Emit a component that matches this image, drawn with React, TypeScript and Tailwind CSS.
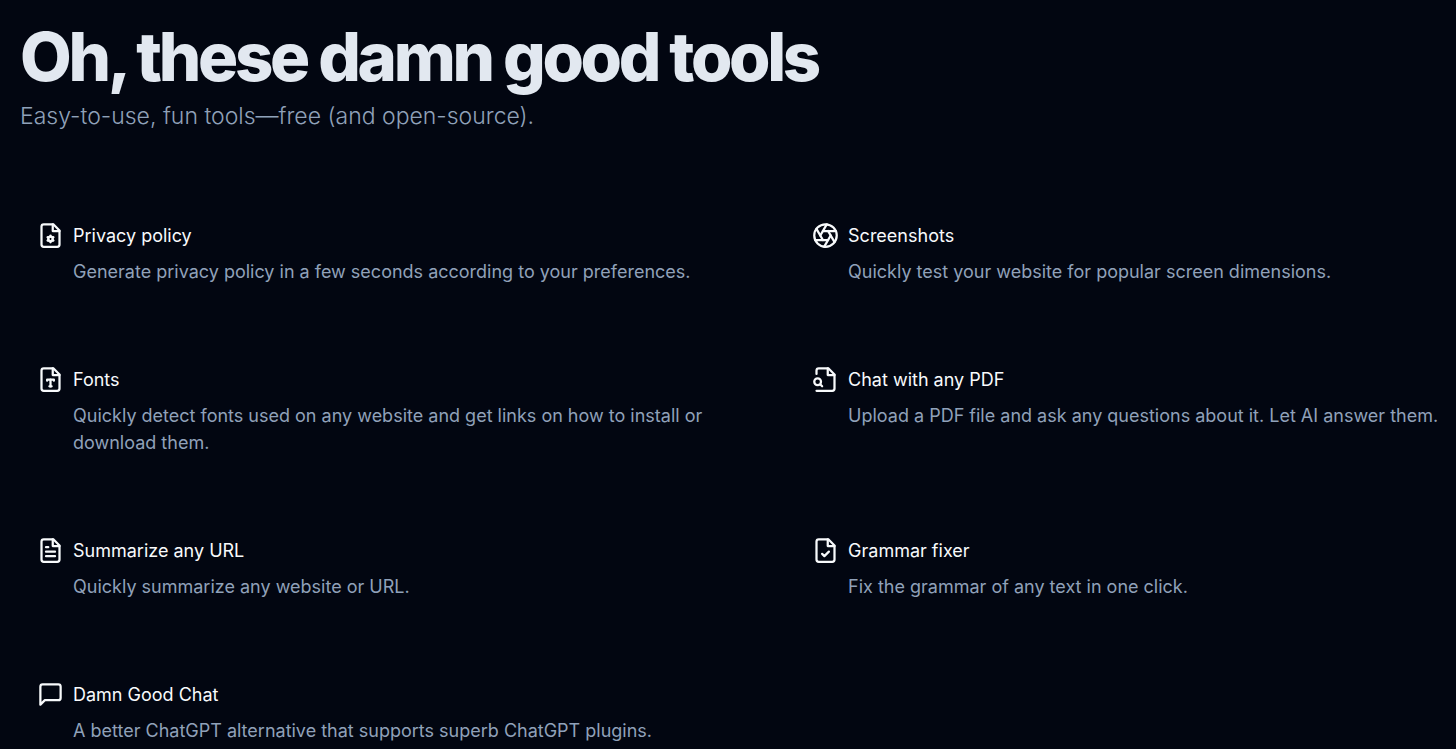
import type { ReactNode } from 'react';
import { Aperture } from 'lucide-react';

type Tool = {
  title: string;
  description: string;
  icon: ReactNode;
};

function Icon({ children }: { children: ReactNode }) {
  return (
    <svg
      viewBox="0 0 24 24"
      width={27}
      height={27}
      fill="none"
      stroke="currentColor"
      strokeWidth={2}
      strokeLinecap="round"
      strokeLinejoin="round"
      aria-hidden="true"
    >
      {children}
    </svg>
  );
}

// Page outline with a folded corner, shared by the document icons
function FileIcon({ children }: { children: ReactNode }) {
  return (
    <Icon>
      <path d="M14.5 2H6a2 2 0 0 0-2 2v16a2 2 0 0 0 2 2h12a2 2 0 0 0 2-2V7.5L14.5 2z" />
      <path d="M14 2v6h6" />
      {children}
    </Icon>
  );
}

const tools: Tool[] = [
  {
    title: 'Privacy policy',
    description: 'Generate privacy policy in a few seconds according to your preferences.',
    icon: (
      <FileIcon>
        <circle cx="12" cy="15" r="2" />
        <path d="M12 12v1" />
        <path d="M12 17v1" />
        <path d="m14.6 13.5-.87.5" />
        <path d="m10.27 16-.87.5" />
        <path d="m14.6 16.5-.87-.5" />
        <path d="m10.27 14-.87-.5" />
      </FileIcon>
    ),
  },
  {
    title: 'Screenshots',
    description: 'Quickly test your website for popular screen dimensions.',
    icon: <Aperture size={27} />,
  },
  {
    title: 'Fonts',
    description:
      'Quickly detect fonts used on any website and get links on how to install or download them.',
    icon: (
      <FileIcon>
        <path d="M9 13v-1h6v1" />
        <path d="M11 18h2" />
        <path d="M12 12v6" />
      </FileIcon>
    ),
  },
  {
    title: 'Chat with any PDF',
    description: 'Upload a PDF file and ask any questions about it. Let AI answer them.',
    icon: (
      <Icon>
        <path d="M4 22h14a2 2 0 0 0 2-2V7.5L14.5 2H6a2 2 0 0 0-2 2v3" />
        <path d="M14 2v6h6" />
        <circle cx="5" cy="14" r="3" />
        <path d="m9 18-1.5-1.5" />
      </Icon>
    ),
  },
  {
    title: 'Summarize any URL',
    description: 'Quickly summarize any website or URL.',
    icon: (
      <FileIcon>
        <path d="M16 13H8" />
        <path d="M16 17H8" />
        <path d="M10 9H8" />
      </FileIcon>
    ),
  },
  {
    title: 'Grammar fixer',
    description: 'Fix the grammar of any text in one click.',
    icon: (
      <FileIcon>
        <path d="m9 15 2 2 4-4" />
      </FileIcon>
    ),
  },
  {
    title: 'Damn Good Chat',
    description: 'A better ChatGPT alternative that supports superb ChatGPT plugins.',
    icon: (
      <Icon>
        <path d="M21 15a2 2 0 0 1-2 2H7l-4 4V5a2 2 0 0 1 2-2h14a2 2 0 0 1 2 2z" />
      </Icon>
    ),
  },
];

function ToolCard({ title, description, icon }: Tool) {
  return (
    <a href="#" className="flex items-start gap-[9px] pl-[17px]">
      <span className="shrink-0 text-slate-50">{icon}</span>
      <div>
        <h2 className="text-lg leading-[27px] text-slate-50">{title}</h2>
        <p className="mt-[9px] text-lg leading-[27px] text-slate-400">{description}</p>
      </div>
    </a>
  );
}

export default function App() {
  return (
    <main className="min-h-screen bg-[#020611] pt-[23px] pr-3 pb-1 pl-5 font-['Inter',sans-serif] antialiased">
      <header>
        <h1 className="text-[67px] leading-[68px] font-extrabold tracking-tighter text-slate-200">
          Oh, these damn good tools
        </h1>
        <p className="mt-[9px] text-[23px] leading-8 font-light text-slate-400">
          Easy-to-use, fun tools—free (and open-source).
        </p>
      </header>

      {/* Tools */}
      <section className="mt-[90px] grid grid-cols-[7fr_6fr] gap-x-[18px] gap-y-[81px]">
        {tools.map((tool) => (
          <ToolCard key={tool.title} {...tool} />
        ))}
      </section>
    </main>
  );
}
